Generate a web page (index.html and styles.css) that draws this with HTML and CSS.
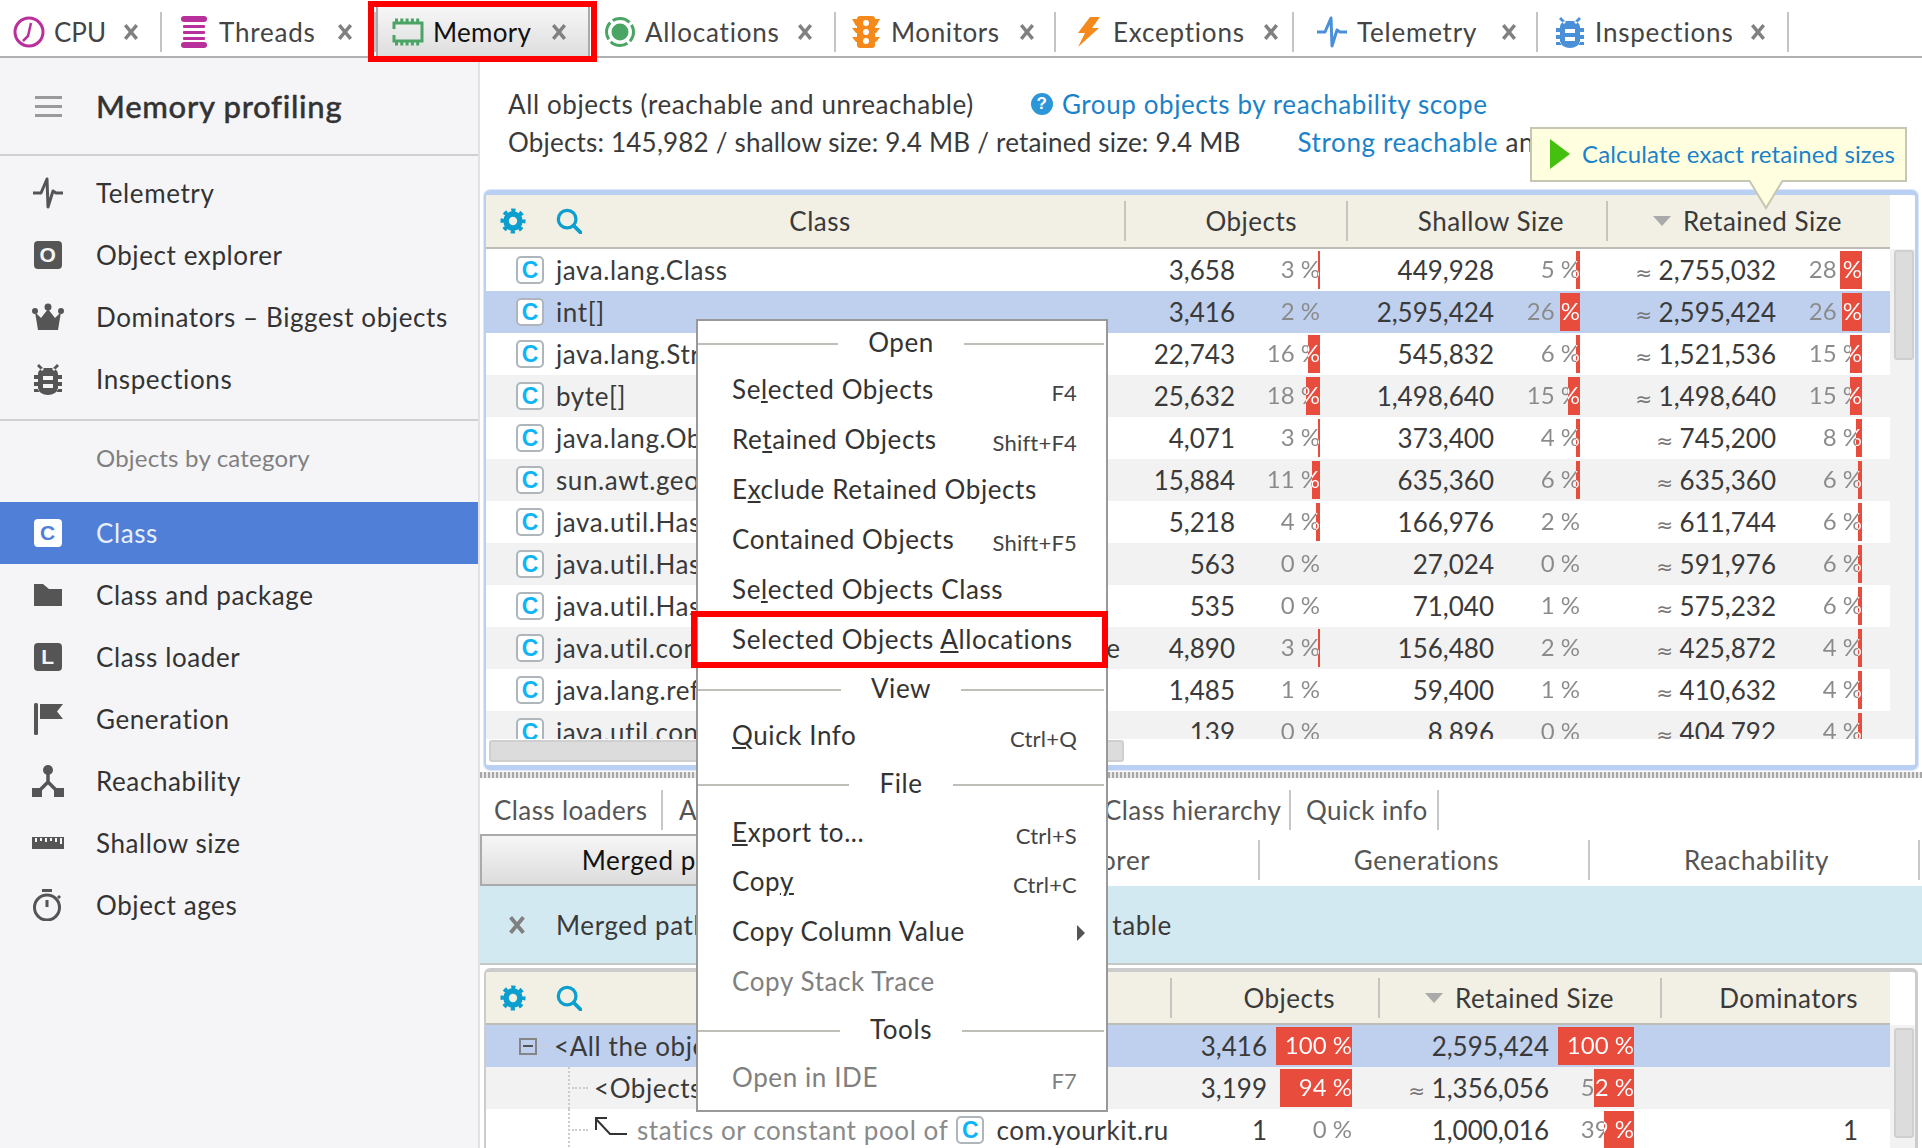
FILE: index.html
```html
<!DOCTYPE html>
<html lang="en">
<head>
    <meta charset="UTF-8">
    <title>Memory profiling</title>
    <link rel="stylesheet" href="styles.css">
</head>
<body>
    <svg class="defs" width="0" height="0">
        <symbol id="i-x" viewBox="0 0 14 14"><path d="M2 1l10 12M12 1L2 13" fill="none" stroke="currentColor" stroke-width="3"/></symbol>
        <symbol id="i-pulse" viewBox="0 0 32 32"><path d="M1 16H9L15 2L16 30L21 14L24 16H31" fill="none" stroke="currentColor" stroke-width="3" stroke-linejoin="round"/></symbol>
        <symbol id="i-bug" viewBox="0 0 32 32"><path fill-rule="evenodd" fill="currentColor" d="M12 5h8c3 0 6 3 6 6v14c0 4-5 7-10 7s-10-3-10-7V11c0-3 3-6 6-6zM11 13h10v4H11zM11 21h10v4H11zM2 12h4v4H2zM26 12h4v4h-4zM2 19h4v4H2zM26 19h4v4h-4zM2 26h5v3H2zM25 26h5v3h-5zM7 1l5 5-2 2-5-5zM25 1l-5 5 2 2 5-5z"/></symbol>
        <symbol id="i-crown" viewBox="0 0 32 32"><path fill="currentColor" d="M3 11l6 6 7-9 7 9 6-6-3 18H6z"/><circle cx="16" cy="6" r="3.5" fill="currentColor"/><circle cx="3" cy="10" r="3" fill="currentColor"/><circle cx="29" cy="10" r="3" fill="currentColor"/></symbol>
        <symbol id="i-folder" viewBox="0 0 32 32"><path fill="currentColor" d="M2 5H11L17 10H30V27H2Z"/></symbol>
        <symbol id="i-flag" viewBox="0 0 32 32"><rect x="2" y="0" width="4" height="32" rx="1.5" fill="currentColor"/><path fill="currentColor" d="M8 1H31L25 8.5L31 16H8Z"/></symbol>
        <symbol id="i-reach" viewBox="0 0 32 32"><circle cx="16" cy="5" r="5" fill="currentColor"/><path d="M16 8V17M5 28L16 17L27 28" fill="none" stroke="currentColor" stroke-width="3.5"/><rect x="0" y="23" width="10" height="9" fill="currentColor"/><rect x="22" y="23" width="10" height="9" fill="currentColor"/></symbol>
        <symbol id="i-ruler" viewBox="0 0 32 32"><path fill="currentColor" fill-rule="evenodd" d="M0 10H32V22H0ZM3 11h2v4H3zM8 11h2v3H8zM13 11h2v4h-2zM18 11h2v3h-2zM23 11h2v4h-2zM28 11h2v6h-2z"/></symbol>
        <symbol id="i-timer" viewBox="0 0 32 32"><circle cx="15" cy="18.500" r="12.500" fill="none" stroke="currentColor" stroke-width="3"/><rect x="10" y="0" width="10" height="3" fill="currentColor"/><path d="M15 11v7M26 7l2 2" stroke="currentColor" stroke-width="3"/></symbol>
        <symbol id="i-gear" viewBox="0 0 28 28"><circle cx="14" cy="14" r="7.500" fill="none" stroke="currentColor" stroke-width="6"/><circle cx="14" cy="14" r="11.500" fill="none" stroke="currentColor" stroke-width="4" stroke-dasharray="4.500 4.530" stroke-dashoffset="2.200"/></symbol>
        <symbol id="i-search" viewBox="0 0 28 28"><circle cx="12" cy="12" r="9.500" fill="none" stroke="currentColor" stroke-width="3.500"/><path d="M19 19l8 8" stroke="currentColor" stroke-width="4" stroke-linecap="round"/></symbol>
    </svg>

    <header class="tabs">
        <div class="tab tab-cpu">
            <svg class="tab-icon" viewBox="0 0 32 32"><circle cx="16" cy="16" r="14" fill="none" stroke="#b92f9b" stroke-width="3"/><path d="M18 7L15 20L10 25" fill="none" stroke="#b92f9b" stroke-width="2.500"/></svg>
            <span>CPU</span><svg class="tab-x"><use href="#i-x"/></svg>
        </div>
        <div class="tab tab-threads">
            <svg class="tab-icon" viewBox="0 0 32 32" fill="#b92f9b"><rect x="3" y="0" width="26" height="6" rx="3"/><rect x="5" y="9" width="22" height="3" rx="1"/><rect x="5" y="15" width="22" height="3" rx="1"/><rect x="5" y="21" width="22" height="3" rx="1"/><rect x="3" y="26" width="26" height="6" rx="3"/></svg>
            <span>Threads</span><svg class="tab-x"><use href="#i-x"/></svg>
        </div>
        <div class="tab tab-memory active">
            <svg class="tab-icon" viewBox="0 0 32 32"><rect x="2" y="7" width="28" height="18" fill="none" stroke="#4aa564" stroke-width="3"/><path d="M3 4.500H29M3 27.500H29" stroke="#4aa564" stroke-width="4" stroke-dasharray="3 2.300"/><rect x="0" y="13" width="4" height="6" fill="#e8e8e8"/></svg>
            <span>Memory</span><svg class="tab-x"><use href="#i-x"/></svg>
        </div>
        <div class="tab tab-alloc">
            <svg class="tab-icon" viewBox="0 0 32 32"><circle cx="16" cy="16" r="8.500" fill="#4aa564"/><circle cx="16" cy="16" r="13.500" fill="none" stroke="#4aa564" stroke-width="3" stroke-dasharray="18 3.200" stroke-dashoffset="8"/></svg>
            <span>Allocations</span><svg class="tab-x"><use href="#i-x"/></svg>
        </div>
        <div class="tab tab-monitors">
            <svg class="tab-icon" viewBox="0 0 32 32"><path fill="#f5891c" d="M2 3h6l2 5H8v2H6zM30 3h-6l-2 5h2v2h2zM2 12h6v5H6zM30 12h-6v5h2zM2 21h6v5H6zM30 21h-6v5h2z"/><rect x="7" y="0" width="18" height="32" rx="3" fill="#f5891c"/><circle cx="16" cy="7" r="3" fill="#fff"/><circle cx="16" cy="16" r="3" fill="#fff"/><circle cx="16" cy="25" r="3" fill="#fff"/></svg>
            <span>Monitors</span><svg class="tab-x"><use href="#i-x"/></svg>
        </div>
        <div class="tab tab-exc">
            <svg class="tab-icon" viewBox="0 0 32 32"><path fill="#f5891c" d="M18 1H28L20 12H27L6 31L13 17H6Z"/></svg>
            <span>Exceptions</span><svg class="tab-x"><use href="#i-x"/></svg>
        </div>
        <div class="tab tab-telemetry">
            <svg class="tab-icon blue"><use href="#i-pulse"/></svg>
            <span>Telemetry</span><svg class="tab-x"><use href="#i-x"/></svg>
        </div>
        <div class="tab tab-insp">
            <svg class="tab-icon blue"><use href="#i-bug"/></svg>
            <span>Inspections</span><svg class="tab-x"><use href="#i-x"/></svg>
        </div>
    </header>

    <div class="layout">
        <aside class="sidebar">
            <div class="side-title">
                <div class="burger"><b></b><b></b><b></b></div>
                <h1>Memory profiling</h1>
            </div>
            <nav class="side-group first">
                <div class="side-item"><svg class="side-icon"><use href="#i-pulse"/></svg>Telemetry</div>
                <div class="side-item"><span class="badge">O</span>Object explorer</div>
                <div class="side-item"><svg class="side-icon"><use href="#i-crown"/></svg>Dominators – Biggest objects</div>
                <div class="side-item"><svg class="side-icon"><use href="#i-bug"/></svg>Inspections</div>
            </nav>
            <nav class="side-group">
                <div class="side-item side-caption">Objects by category</div>
                <div class="side-item selected"><span class="badge">C</span>Class</div>
                <div class="side-item"><svg class="side-icon"><use href="#i-folder"/></svg>Class and package</div>
                <div class="side-item"><span class="badge">L</span>Class loader</div>
                <div class="side-item"><svg class="side-icon"><use href="#i-flag"/></svg>Generation</div>
                <div class="side-item"><svg class="side-icon"><use href="#i-reach"/></svg>Reachability</div>
                <div class="side-item"><svg class="side-icon"><use href="#i-ruler"/></svg>Shallow size</div>
                <div class="side-item"><svg class="side-icon"><use href="#i-timer"/></svg>Object ages</div>
            </nav>
        </aside>

        <main class="main">
            <section class="summary">
                <div class="summary-line">
                    <span class="scope">All objects (reachable and unreachable)</span>
                    <span class="help">?</span>
                    <a class="link">Group objects by reachability scope</a>
                </div>
                <div class="summary-line">
                    <span class="totals">Objects: 145,982 / shallow size: 9.4 MB / retained size: 9.4 MB</span>
                    <a class="link strong-link">Strong reachable</a><span>&nbsp;and</span>
                </div>
            </section>

            <section class="panel focused">
                <div class="thead upper">
                    <div class="th th-class">
                        <svg class="tool"><use href="#i-gear"/></svg>
                        <svg class="tool"><use href="#i-search"/></svg>
                        <span class="th-label">Class</span>
                    </div>
                    <div class="th th-objects">Objects</div>
                    <div class="th th-shallow">Shallow Size</div>
                    <div class="th th-retained"><i class="sort"></i>Retained Size</div>
                </div>
                <div class="tbody upper-body">
                    <div class="rows">
                        <div class="row upper"><span class="name"><i class="cls">C</i>java.lang.Class</span><span class="num">3,658</span><span class="pct" style="--w:2px">3 %</span><span class="num">449,928</span><span class="pct" style="--w:4px">5 %</span><span class="num"><em>≈</em> 2,755,032</span><span class="pct" style="--w:22px">28 %</span></div>
                        <div class="row upper sel"><span class="name"><i class="cls">C</i>int[]</span><span class="num">3,416</span><span class="pct" style="--w:0px">2 %</span><span class="num">2,595,424</span><span class="pct" style="--w:20px">26 %</span><span class="num"><em>≈</em> 2,595,424</span><span class="pct" style="--w:20px">26 %</span></div>
                        <div class="row upper plain"><span class="name"><i class="cls">C</i>java.lang.String</span><span class="num">22,743</span><span class="pct" style="--w:12px">16 %</span><span class="num">545,832</span><span class="pct" style="--w:4px">6 %</span><span class="num"><em>≈</em> 1,521,536</span><span class="pct" style="--w:12px">15 %</span></div>
                        <div class="row upper"><span class="name"><i class="cls">C</i>byte[]</span><span class="num">25,632</span><span class="pct" style="--w:14px">18 %</span><span class="num">1,498,640</span><span class="pct" style="--w:12px">15 %</span><span class="num"><em>≈</em> 1,498,640</span><span class="pct" style="--w:12px">15 %</span></div>
                        <div class="row upper"><span class="name"><i class="cls">C</i>java.lang.Object[]</span><span class="num">4,071</span><span class="pct" style="--w:2px">3 %</span><span class="num">373,400</span><span class="pct" style="--w:4px">4 %</span><span class="num"><em>≈</em> 745,200</span><span class="pct" style="--w:6px">8 %</span></div>
                        <div class="row upper"><span class="name"><i class="cls">C</i>sun.awt.geom.Edge</span><span class="num">15,884</span><span class="pct" style="--w:8px">11 %</span><span class="num">635,360</span><span class="pct" style="--w:4px">6 %</span><span class="num"><em>≈</em> 635,360</span><span class="pct" style="--w:4px">6 %</span></div>
                        <div class="row upper"><span class="name"><i class="cls">C</i>java.util.HashMap</span><span class="num">5,218</span><span class="pct" style="--w:4px">4 %</span><span class="num">166,976</span><span class="pct" style="--w:0px">2 %</span><span class="num"><em>≈</em> 611,744</span><span class="pct" style="--w:4px">6 %</span></div>
                        <div class="row upper"><span class="name"><i class="cls">C</i>java.util.Hashtable</span><span class="num">563</span><span class="pct" style="--w:0px">0 %</span><span class="num">27,024</span><span class="pct" style="--w:0px">0 %</span><span class="num"><em>≈</em> 591,976</span><span class="pct" style="--w:4px">6 %</span></div>
                        <div class="row upper"><span class="name"><i class="cls">C</i>java.util.HashSet</span><span class="num">535</span><span class="pct" style="--w:0px">0 %</span><span class="num">71,040</span><span class="pct" style="--w:0px">1 %</span><span class="num"><em>≈</em> 575,232</span><span class="pct" style="--w:4px">6 %</span></div>
                        <div class="row upper"><span class="name"><i class="cls">C</i>java.util.concurrent.ConcurrentHashMap$Node</span><span class="num">4,890</span><span class="pct" style="--w:2px">3 %</span><span class="num">156,480</span><span class="pct" style="--w:0px">2 %</span><span class="num"><em>≈</em> 425,872</span><span class="pct" style="--w:4px">4 %</span></div>
                        <div class="row upper"><span class="name"><i class="cls">C</i>java.lang.ref.Finalizer</span><span class="num">1,485</span><span class="pct" style="--w:0px">1 %</span><span class="num">59,400</span><span class="pct" style="--w:0px">1 %</span><span class="num"><em>≈</em> 410,632</span><span class="pct" style="--w:4px">4 %</span></div>
                        <div class="row upper"><span class="name"><i class="cls">C</i>java.util.concurrent</span><span class="num">139</span><span class="pct" style="--w:0px">0 %</span><span class="num">8,896</span><span class="pct" style="--w:0px">0 %</span><span class="num"><em>≈</em> 404,792</span><span class="pct" style="--w:4px">4 %</span></div>
                    </div>
                    <div class="vscroll"><div class="vthumb"></div></div>
                </div>
                <div class="hscroll"><div class="hthumb"></div></div>
            </section>

            <div class="splitter"></div>

            <nav class="subtabs">
                <div class="subtab">Class loaders</div>
                <div class="subtab subtab-alloc">Allocations</div>
                <div class="subtab">Class hierarchy</div>
                <div class="subtab subtab-info">Quick info</div>
            </nav>

            <nav class="viewtabs">
                <div class="viewtab active">Merged paths</div>
                <div class="viewtab view-explorer">Object explorer</div>
                <div class="viewtab view-right">Generations</div>
                <div class="viewtab view-right">Reachability</div>
            </nav>

            <div class="infobar">
                <svg class="info-x"><use href="#i-x"/></svg>
                <span>Merged paths of objects selected in the upper table</span>
            </div>

            <section class="panel lower-panel">
                <div class="thead lower">
                    <div class="th th-class">
                        <svg class="tool"><use href="#i-gear"/></svg>
                        <svg class="tool"><use href="#i-search"/></svg>
                    </div>
                    <div class="th th-objects2">Objects</div>
                    <div class="th th-retained2"><i class="sort"></i>Retained Size</div>
                    <div class="th th-dom">Dominators</div>
                </div>
                <div class="tbody">
                    <div class="rows">
                        <div class="row lower sel"><span class="name node-root"><i class="minus"></i><i class="dots"></i>&lt;All the objects&gt;</span><span class="num">3,416</span><span class="pct" style="--w:76px">100 %</span><span class="num">2,595,424</span><span class="pct" style="--w:76px">100 %</span><span class="num"></span></div>
                        <div class="row lower"><span class="name node-child"><i class="branch"></i>&lt;Objects&gt;</span><span class="num">3,199</span><span class="pct" style="--w:72px">94 %</span><span class="num"><em>≈</em> 1,356,056</span><span class="pct" style="--w:40px">52 %</span><span class="num"></span></div>
                        <div class="row lower plain"><span class="name node-child"><i class="branch"></i><svg class="ref-arrow" viewBox="0 0 33 18"><path d="M1 1H13M2 1V13M2 2L16 17H33" fill="none" stroke="#333" stroke-width="2"/></svg><span class="muted">statics or constant pool of</span><i class="cls">C</i>com.yourkit.runtime</span><span class="num">1</span><span class="pct" style="--w:0px">0 %</span><span class="num">1,000,016</span><span class="pct" style="--w:30px">39 %</span><span class="num">1</span></div>
                    </div>
                    <div class="vscroll"><div class="vthumb lower-thumb"></div></div>
                </div>
            </section>
        </main>
    </div>

    <div class="tooltip">
        <i class="play"></i>
        <a class="link">Calculate exact retained sizes</a>
        <svg class="tip-arrow" viewBox="0 0 36 30"><path d="M1 0L18 28L35 0" fill="#ffffe0" stroke="#c6c6b4" stroke-width="2"/></svg>
    </div>

    <div class="menu">
        <div class="menu-title"><span>Open</span></div>
        <div class="menu-item"><span>Se<u>l</u>ected Objects</span><kbd>F4</kbd></div>
        <div class="menu-item"><span>Re<u>t</u>ained Objects</span><kbd>Shift+F4</kbd></div>
        <div class="menu-item"><span>E<u>x</u>clude Retained Objects</span></div>
        <div class="menu-item"><span>Contained Objects</span><kbd>Shift+F5</kbd></div>
        <div class="menu-item"><span>Se<u>l</u>ected Objects Class</span></div>
        <div class="menu-item marked"><span>Selected Objects <u>A</u>llocations</span></div>
        <div class="menu-title"><span>View</span></div>
        <div class="menu-item"><span><u>Q</u>uick Info</span><kbd>Ctrl+Q</kbd></div>
        <div class="menu-title"><span>File</span></div>
        <div class="menu-item"><span><u>E</u>xport to...</span><kbd>Ctrl+S</kbd></div>
        <div class="menu-item"><span>Cop<u>y</u></span><kbd>Ctrl+C</kbd></div>
        <div class="menu-item"><span>Copy Column Value</span><i class="submenu"></i></div>
        <div class="menu-item off"><span>Copy Stack Trace</span></div>
        <div class="menu-title"><span>Tools</span></div>
        <div class="menu-item off"><span>Open in IDE</span><kbd>F7</kbd></div>
    </div>
</body>
</html>
```

FILE: styles.css
```css
:root {
    --ui-font: "Lato", "Noto Sans", sans-serif;
    --text-color: #3a3a3a;
    --muted-color: #8a8a8a;
    --link-color: #1b82c9;
    --bar-color: #e84c3d;
    --sel-color: #bfd0ee;
    --alt-row: #f2f2f2;
    --head-bg: #f2efe4;
    --line-color: #bdbdb8;
}

html, body {
    margin: 0;
    height: 1148px;
    overflow: hidden;
}

body {
    position: relative;
    width: 1922px;
    font-family: var(--ui-font);
    font-size: 26px;
    letter-spacing: 0.6px;
    color: var(--text-color);
    background-color: white;
}

.defs {
    position: absolute;
}

/* top tabs */
.tabs {
    display: grid;
    grid-template-columns: 162px 214px 214px 246px 220px 238px 244px 251px;
    height: 56px;
    border-bottom: 2px solid #b0b0b0;
    letter-spacing: 0.8px;
}

.tab {
    position: relative;
    display: flex;
    align-items: center;
    height: 40px;
    margin-top: 12px;
    border-right: 2px solid #c4c4c4;
    color: #444;
    box-sizing: border-box;
}

.tab-icon {
    flex: none;
    width: 32px;
    height: 32px;
    margin-right: 9px;
}

.tab-icon.blue {
    color: #4a90d9;
}

.tab-x {
    flex: none;
    width: 16px;
    height: 16px;
    margin-left: auto;
    margin-right: 21px;
    color: #808080;
}

.tab-cpu { padding-left: 13px; letter-spacing: 0; }
.tab-threads { padding-left: 16px; }
.tab-memory { padding-left: 14px; letter-spacing: 0.3px; }
.tab-alloc { padding-left: 14px; }
.tab-monitors { padding-left: 14px; letter-spacing: 0.6px; }
.tab-exc { padding-left: 16px; }
.tab-telemetry { padding-left: 22px; }
.tab-insp { padding-left: 16px; }

.tab-monitors .tab-x { margin-right: 19px; }
.tab-exc .tab-x { margin-right: 13px; }
.tab-telemetry .tab-x { margin-right: 19px; }

.tab.active {
    height: 52px;
    margin-top: 4px;
    padding-top: 3px;
    color: #111;
    background: linear-gradient(#f8f8f8, #dedede);
    border-left: 2px solid #aaa;
    border-right: 2px solid #aaa;
}

.tab.active::after {
    content: "";
    position: absolute;
    top: -3px;
    left: -10px;
    right: -9px;
    bottom: -6px;
    border: 6px solid #f00;
    z-index: 5;
}

/* sidebar + main */
.layout {
    display: grid;
    grid-template-columns: 480px 1fr;
    height: 1090px;
}

.sidebar {
    background-color: #f5f5f8;
    border-right: 2px solid #e2e2e2;
    box-sizing: border-box;
}

.side-title {
    display: flex;
    align-items: center;
    height: 96px;
    border-bottom: 2px solid #d0d0d0;
    padding-left: 35px;
}

.side-title h1 {
    margin: 0 0 0 34px;
    font-size: 31px;
    font-weight: 500;
    letter-spacing: 0.7px;
    -webkit-text-stroke: 0.4px #333;
    color: #333;
}

.burger b {
    display: block;
    width: 27px;
    height: 3px;
    margin: 6px 0;
    background-color: #9a9a9a;
}

.side-group.first {
    padding: 6px 0 9px;
    border-bottom: 2px solid #d0d0d0;
}

.side-group {
    padding-top: 5px;
}

.side-item {
    display: flex;
    align-items: center;
    height: 62px;
    padding-left: 32px;
    color: #333;
}

.side-caption {
    padding-left: 96px;
    margin-bottom: 14px;
    font-size: 24px;
    letter-spacing: 0.2px;
    color: #808080;
}

.side-item.selected {
    background-color: #507fd7;
    color: #e8effb;
}

.side-icon {
    flex: none;
    width: 32px;
    height: 32px;
    margin-right: 32px;
    color: #555;
}

.badge {
    flex: none;
    width: 28px;
    height: 28px;
    margin: 0 34px 0 2px;
    border-radius: 4px;
    background-color: #555;
    color: #f5f5f8;
    font: 700 21px/28px "Liberation Sans", sans-serif;
    text-align: center;
}

.selected .badge {
    background-color: white;
    color: #507fd7;
}

/* summary lines */
.main {
    min-width: 0;
    overflow: hidden;
}

.summary {
    height: 132px;
    padding: 27px 0 0 28px;
    box-sizing: border-box;
}

.summary-line {
    display: flex;
    align-items: center;
    height: 38px;
    white-space: nowrap;
}

.totals {
    letter-spacing: 0.2px;
}

.link {
    color: var(--link-color);
}

.help {
    width: 22px;
    height: 22px;
    margin: 0 9px 0 57px;
    border-radius: 50%;
    background-color: #2c96d8;
    color: white;
    font: 700 17px/22px "Liberation Sans", sans-serif;
    text-align: center;
}

.strong-link {
    margin-left: 57px;
}

/* tables */
.panel {
    margin-left: 4px;
    width: 1434px;
    box-sizing: border-box;
    border: solid #b9d0f3;
    border-width: 5px 3px 5px 2px;
    border-radius: 6px;
    height: 580px;
    box-shadow: 0 0 0 1px #dce8f8;
    overflow: hidden;
}

.lower-panel {
    height: 190px;
    margin-top: 3px;
    border-color: #ccc;
    border-width: 4px 3px 0 2px;
    box-shadow: none;
}

.thead {
    display: grid;
    align-items: center;
    width: 1404px;
    height: 54px;
    box-sizing: border-box;
    border-bottom: 2px solid var(--line-color);
    background-color: var(--head-bg);
}

.thead.upper {
    grid-template-columns: 638px 222px 260px 284px;
}

.thead.lower {
    grid-template-columns: 684px 208px 282px 230px;
    height: 53px;
}

.th {
    display: flex;
    align-items: center;
    justify-content: flex-end;
    height: 40px;
    border-left: 2px solid #c4c4c0;
    box-sizing: border-box;
    letter-spacing: 0.5px;
}

.th-class {
    justify-content: flex-start;
    padding-left: 14px;
    border-left: none;
}

.th-label {
    flex: 1;
    padding-right: 96px;
    text-align: center;
}

.tool {
    flex: none;
    width: 26px;
    height: 26px;
    margin-right: 30px;
    color: #0a9fcf;
}

.th-objects { padding-right: 49px; }
.th-shallow { padding-right: 42px; }
.th-retained { padding-right: 48px; }
.th-objects2 { padding-right: 43px; }
.th-retained2 { padding-right: 46px; }
.th-dom { padding-right: 32px; }

.sort {
    width: 0;
    height: 0;
    margin-right: 12px;
    border: solid transparent;
    border-width: 10px 9px 0;
    border-top-color: #aaa;
}

.tbody {
    display: flex;
}

.rows {
    width: 1404px;
    overflow: hidden;
}

.upper-body {
    height: 490px;
}

.row {
    display: grid;
    align-items: stretch;
    height: 42px;
    line-height: 42px;
    background-color: var(--alt-row);
}

.row.upper {
    grid-template-columns: 638px 111px 85px 174px 86px 196px 86px;
}

.row.lower {
    grid-template-columns: 684px 97px 85px 197px 85px 224px;
}

.row.upper:nth-child(odd),
.row.plain {
    background-color: white;
}

.row.sel {
    background-color: var(--sel-color);
}

.name {
    display: flex;
    align-items: center;
    padding-left: 30px;
    overflow: hidden;
    white-space: nowrap;
}

.cls {
    flex: none;
    width: 28px;
    height: 28px;
    margin-right: 12px;
    box-sizing: border-box;
    border: 2px solid #aeb6bc;
    border-radius: 5px;
    background-color: white;
    color: #0db4f6;
    font: 700 23px/24px "Liberation Sans", sans-serif;
    letter-spacing: 0;
    text-align: center;
}

.num {
    text-align: right;
    white-space: nowrap;
    letter-spacing: 0;
}

.num em {
    font: 20px "DejaVu Sans", sans-serif;
    color: #777;
}

.pct {
    margin: 2px 0;
    line-height: 36px;
    font-size: 24px;
    letter-spacing: 0;
    text-align: right;
    white-space: nowrap;
    color: transparent;
    background-image:
        linear-gradient(to left, #fff var(--w), var(--muted-color) var(--w)),
        linear-gradient(to left, var(--bar-color) var(--w), transparent var(--w));
    -webkit-background-clip: text, border-box;
    background-clip: text, border-box;
}

.vscroll {
    flex: none;
    width: 25px;
    box-sizing: border-box;
    padding: 1px 1px 0 4px;
    background-color: var(--alt-row);
}

.vthumb {
    height: 110px;
    box-sizing: border-box;
    border: 2px solid #cfcfcf;
    border-radius: 3px;
    background-color: #dcdcdc;
}

.lower-thumb {
    margin-top: 2px;
}

.hscroll {
    height: 25px;
    padding-top: 1px;
    box-sizing: border-box;
}

.hthumb {
    width: 635px;
    height: 22px;
    margin-left: 3px;
    box-sizing: border-box;
    border: 2px solid #cfcfcf;
    border-radius: 3px;
    background-color: #dcdcdc;
}

/* lower part */
.splitter {
    height: 6px;
    margin-top: 2px;
    background: repeating-linear-gradient(to right, #a8a8a8 0 2px, #e8e8e8 2px 4px);
}

.subtabs {
    display: grid;
    grid-template-columns: 183px 427px 201px 148px;
    align-items: end;
    height: 52px;
    padding-bottom: 3px;
    letter-spacing: 0.4px;
}

.subtab {
    height: 40px;
    line-height: 40px;
    padding-left: 14px;
    border-right: 2px solid #c8c8c8;
    box-sizing: border-box;
    color: #555;
    white-space: nowrap;
}

.subtab-alloc {
    padding-left: 16px;
    border-right: none;
}

.subtab-info {
    padding-left: 15px;
}

.viewtabs {
    display: grid;
    grid-template-columns: 360px 420px 330px 330px;
    align-items: center;
    height: 53px;
}

.viewtab {
    height: 40px;
    line-height: 40px;
    border-right: 2px solid #c8c8c8;
    box-sizing: border-box;
    text-align: center;
    color: #555;
}

.view-explorer {
    padding-left: 16px;
}

.view-right {
    padding-left: 5px;
}

.viewtab.active {
    height: 52px;
    line-height: 48px;
    padding-left: 8px;
    color: #111;
    border: 2px solid #aaa;
    background: linear-gradient(#f6f6f6, #dcdcdc);
}

.infobar {
    display: flex;
    align-items: center;
    height: 79px;
    box-sizing: border-box;
    border-bottom: 2px solid #c4c8c8;
    background-color: #d3e9f1;
}

.info-x {
    width: 18px;
    height: 18px;
    margin: 0 30px 0 28px;
    color: #808080;
}

.node-root {
    padding-left: 33px;
}

.minus {
    flex: none;
    position: relative;
    width: 18px;
    height: 17px;
    box-sizing: border-box;
    border: 2px solid #858585;
}

.minus::after {
    content: "";
    position: absolute;
    left: 2px;
    right: 2px;
    top: 5px;
    height: 2px;
    background-color: #555;
}

.dots {
    flex: none;
    width: 10px;
    margin: 0 5px 0 2px;
    border-top: 2px dotted #ccc;
}

.node-child {
    padding-left: 82px;
    align-items: center;
}

.branch {
    flex: none;
    position: relative;
    align-self: stretch;
    width: 26px;
    margin-right: 0;
    border-left: 2px dotted #ccc;
    box-sizing: border-box;
}

.branch::after {
    content: "";
    position: absolute;
    left: 2px;
    right: 6px;
    top: 20px;
    border-top: 2px dotted #ccc;
}

.ref-arrow {
    flex: none;
    width: 33px;
    height: 18px;
    margin: 0 10px 8px 0;
}

.muted {
    margin-right: 8px;
    color: var(--muted-color);
}

.node-child .cls {
    margin-right: 12px;
}

/* tooltip over the table header */
.tooltip {
    position: absolute;
    left: 1530px;
    top: 127px;
    display: flex;
    align-items: center;
    width: 377px;
    height: 55px;
    padding: 0 0 2px 18px;
    box-sizing: border-box;
    border: 2px solid #c6c6b4;
    background-color: #ffffe0;
    white-space: nowrap;
    font-size: 24px;
    letter-spacing: 0.15px;
}

.play {
    flex: none;
    width: 0;
    height: 0;
    margin-right: 12px;
    border: solid transparent;
    border-width: 15px 0 15px 20px;
    border-left-color: #46c010;
}

.tip-arrow {
    position: absolute;
    left: 216px;
    top: 51px;
    width: 36px;
    height: 30px;
}

/* popup menu */
.menu {
    position: absolute;
    left: 696px;
    top: 319px;
    display: grid;
    grid-template-rows: 44px repeat(6, 50px) 48px 46px 50px 48px 50px 50px 50px 46px 50px;
    width: 412px;
    height: 793px;
    box-sizing: border-box;
    border: 2px solid #999;
    background-color: white;
    color: #333;
    z-index: 3;
}

.menu-title {
    display: flex;
    align-items: center;
    gap: 30px;
    padding-right: 2px;
    padding-bottom: 2px;
    color: #333;
}

.menu-title::before,
.menu-title::after {
    content: "";
    flex: 1;
    height: 2px;
    margin-top: 4px;
    background-color: #bfbfb8;
}

.menu-item {
    position: relative;
    display: flex;
    align-items: center;
    justify-content: space-between;
    padding: 0 29px 0 34px;
}

.menu-item span {
    margin-top: -2px;
}

.menu-item kbd {
    margin-top: 5px;
    font: 22px var(--ui-font);
    letter-spacing: 0.2px;
    color: #444;
}

.menu-item.off {
    color: #808080;
}

.menu-item.off kbd {
    color: #808080;
}

.submenu {
    position: absolute;
    right: 21px;
    top: 18px;
    width: 0;
    height: 0;
    border: solid transparent;
    border-width: 8px 0 8px 8px;
    border-left-color: #555;
}

.menu-item.marked::after {
    content: "";
    position: absolute;
    top: -4px;
    left: -7px;
    right: -2px;
    bottom: -3px;
    border: 6px solid #f00;
}
```
